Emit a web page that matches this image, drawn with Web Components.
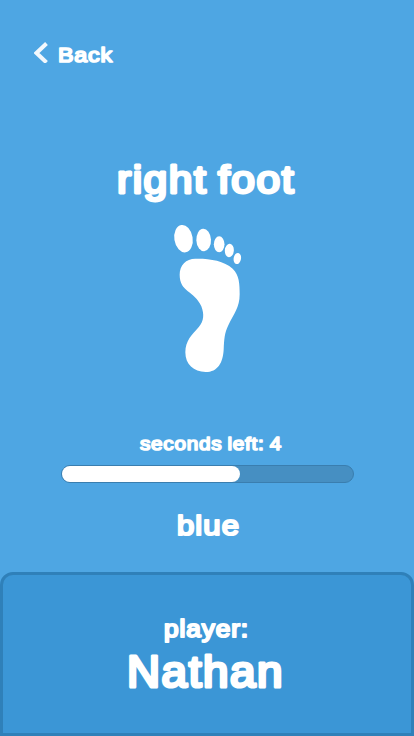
<!DOCTYPE html>
<html lang="en">
<head>
<meta charset="utf-8">
<title>right foot</title>
<style>
html,body{margin:0;height:100%;background:#4ea6e3;font-family:"Liberation Sans",Arial,sans-serif;color:#fff;overflow:hidden}
</style>
</head>
<body>
<game-screen></game-screen>
<script>
// Text with rounded stroke ends: label, size (px), length (advance width), height of box
class RoundedText extends HTMLElement {
  connectedCallback() {
    const a = n => this.getAttribute(n);
    const size = +a('size'), len = +a('length'), h = +a('height');
    const root = this.attachShadow({mode: 'open'});
    root.innerHTML = `<style>
      :host{display:block;flex:none;width:${len}px;height:${h}px}
      svg{display:block;overflow:visible}
      text{font:${size}px "Liberation Sans",Arial,sans-serif;letter-spacing:.035em;word-spacing:-.06em;fill:#fff;stroke:#fff;stroke-width:${a('weight') || size * 0.064};stroke-linejoin:round;stroke-linecap:round}
    </style><svg width="${len}" height="${h}"><text x="0" y="${h}" textLength="${len}" lengthAdjust="spacingAndGlyphs"></text></svg>`;
    root.querySelector('text').textContent = a('label');
  }
}
class BackLink extends HTMLElement {
  connectedCallback() {
    this.attachShadow({mode: 'open'}).innerHTML = `<style>
      :host{display:flex;align-items:flex-end;padding:41px 0 0 34px;gap:9px;height:22px;flex:none}
      svg{display:block}
      rounded-text{margin-bottom:1px}
    </style>
    <svg width="15" height="22" viewBox="0 0 15 22"><path d="M12.500 2.500 2.500 12 12.500 21.500" fill="none" stroke="#f2f8fd" stroke-width="4"/></svg>
    <rounded-text label="Back" size="20.5" length="55" height="16" weight="1.7"></rounded-text>`;
  }
}
class FootIcon extends HTMLElement {
  connectedCallback() {
    this.attachShadow({mode: 'open'}).innerHTML = `<style>:host{display:block;flex:none;width:95px;height:165px}svg{display:block}</style>
    <svg width="95" height="165" viewBox="0 0 285 495" fill="#fff">
      <ellipse cx="70.500" cy="71" rx="27.500" ry="41.500" transform="rotate(-9 70.5 71)"/>
      <ellipse cx="131" cy="75" rx="22" ry="33.500" transform="rotate(-3 131 75)"/>
      <ellipse cx="177.500" cy="88" rx="16" ry="24"/>
      <ellipse cx="208" cy="106.500" rx="13.500" ry="20" transform="rotate(5 208 106.5)"/>
      <ellipse cx="232" cy="130.500" rx="11" ry="17" transform="rotate(10 232 130.5)"/>
      <path d="M106 131C78 131 59 151 59 179C59 232 103 226 124 274C133 298 132 318 117 335C96 359 76 376 76 412C76 448 101 471 137 471C174 471 189 442 191 404C193 371 193 356 205 331C222 296 239 278 239 238C239 207 238 180 218 161C191 136 146 130 106 131Z"/>
    </svg>`;
  }
}
class TimeBar extends HTMLElement {
  connectedCallback() {
    this.attachShadow({mode: 'open'}).innerHTML = `<style>
      :host{display:block;box-sizing:border-box;flex:none;width:293px;height:18px;border:1px solid #3a7eaf;border-radius:9px;background:#468fc2}
      div{height:16px;width:178px;border-radius:8px;background:#fff}
    </style><div></div>`;
  }
}
class PlayerPanel extends HTMLElement {
  connectedCallback() {
    this.attachShadow({mode: 'open'}).innerHTML = `<style>
      :host{display:flex;flex-direction:column;align-items:center;box-sizing:border-box;flex:none;width:414px;height:164px;margin-top:auto;border:3px solid #2f80b9;border-radius:13px 13px 0 0;background:#3b96d6}
    </style><slot></slot>`;
  }
}
class GameScreen extends HTMLElement {
  connectedCallback() {
    this.attachShadow({mode: 'open'}).innerHTML = `<style>
      :host{display:flex;flex-direction:column;width:414px;height:736px;background:#4ea6e3}
      main{display:flex;flex-direction:column;align-items:center}
      .limb{margin:99px 2px 0 0}
      foot-icon{margin-top:22px}
      .left{margin:60px 0 0 7px}
      time-bar{margin:15px 0 0 1px}
      .color{margin:30px 0 0 2px}
      .caption{margin:39px 2px 0 0}
      .name{margin:12px 3px 0 0}
    </style>
    <back-link></back-link>
    <main>
      <rounded-text class="limb" label="right foot" size="38" length="178" height="31" weight="2.9"></rounded-text>
      <foot-icon></foot-icon>
      <rounded-text class="left" label="seconds left: 4" size="18.5" length="142" height="10" weight="1.6"></rounded-text>
      <time-bar></time-bar>
      <rounded-text class="color" label="blue" size="28" length="63" height="22" weight="2.2"></rounded-text>
    </main>
    <player-panel>
      <rounded-text class="caption" label="player:" size="23.5" length="85" height="23" weight="2"></rounded-text>
      <rounded-text class="name" label="Nathan" size="44" length="157" height="38" weight="3.2"></rounded-text>
    </player-panel>`;
  }
}
customElements.define('rounded-text', RoundedText);
customElements.define('back-link', BackLink);
customElements.define('foot-icon', FootIcon);
customElements.define('time-bar', TimeBar);
customElements.define('player-panel', PlayerPanel);
customElements.define('game-screen', GameScreen);
</script>
</body>
</html>
